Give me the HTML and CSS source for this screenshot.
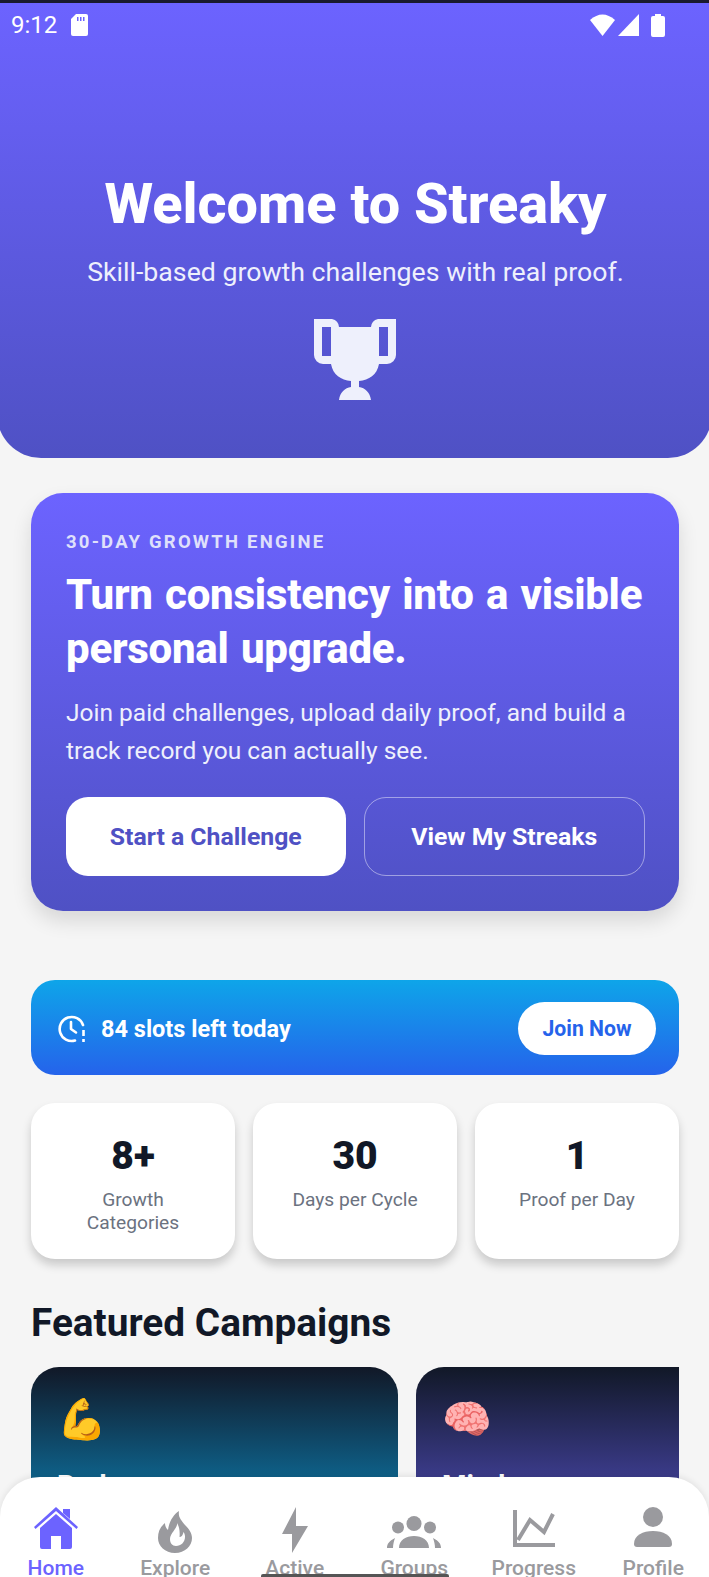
FILE: index.html
```html
<!DOCTYPE html>
<html lang="en">

<head>
    <meta charset="UTF-8">
    <meta name="viewport" content="width=device-width, initial-scale=1.0">
    <title>Streaky</title>
    <link rel="stylesheet" href="styles.css">
</head>

<body>
    <div class="screen">
        <!-- Android status bar -->
        <div class="status-bar">
            <span class="status-time">9:12</span>
            <svg class="sd-icon" width="17" height="22" viewBox="0 0 17 22">
                <path fill="#fff" d="M5 0h10a2 2 0 0 1 2 2v18a2 2 0 0 1-2 2H2a2 2 0 0 1-2-2V5z" />
                <path fill="#6C63FF" d="M6 3h1.500v4H6zM9 3h1.500v4H9zM12 3h1.500v4H12z" />
            </svg>
            <span class="status-right">
                <svg width="25" height="22" viewBox="0 0 25 22">
                    <path fill="#fff" d="M0 6Q12.500-5 25 6L12.500 22z" />
                </svg>
                <svg width="21" height="22" viewBox="0 0 21 22">
                    <path fill="#fff" d="M21 0v22H0z" />
                </svg>
                <svg class="battery" width="14" height="23" viewBox="0 0 14 23">
                    <path fill="#fff" d="M4 0h6v2h2a2 2 0 0 1 2 2v17a2 2 0 0 1-2 2H2a2 2 0 0 1-2-2V4a2 2 0 0 1 2-2h2z" />
                </svg>
            </span>
        </div>

        <header class="hero">
            <h1>Welcome to Streaky</h1>
            <p>Skill-based growth challenges with real proof.</p>
            <svg class="trophy" width="82" height="82" viewBox="0 0 82 82">
                <path fill="#EEF0FC" fill-rule="evenodd" d="M0 1h18a9 9 0 0 1 7 8h32a9 9 0 0 1 7-8h18v36a9 9 0 0 1-9 9H65c-2 11-10 16-20 17v6c6 1 11 5 12 13H25c1-8 6-12 12-13v-6c-10-1-18-6-20-17H9a9 9 0 0 1-9-9zM8 9v29h9V9zM65 9v29h9V9z" />
            </svg>
        </header>

        <main class="content">
            <section class="promo">
                <div class="eyebrow">30-DAY GROWTH ENGINE</div>
                <h2>Turn consistency into a visible personal upgrade.</h2>
                <p>Join paid challenges, upload daily proof, and build a track record you can actually see.</p>
                <div class="promo-buttons">
                    <button class="btn-solid">Start a Challenge</button>
                    <button class="btn-outline">View My Streaks</button>
                </div>
            </section>

            <section class="slots">
                <svg width="28" height="28" viewBox="0 0 28 28" fill="none" stroke="#fff" stroke-width="2.600">
                    <path stroke-linecap="round" d="M25 10A12 12 0 1 0 17 25.500" />
                    <path stroke-linecap="round" stroke-linejoin="round" d="M13 7v7l5 3.500" />
                    <path d="M25.500 15v6M25.500 24v3" />
                </svg>
                <span class="slots-text">84 slots left today</span>
                <button class="btn-join">Join Now</button>
            </section>

            <section class="stats">
                <div class="stat">
                    <div class="stat-num">8+</div>
                    <div class="stat-label">Growth Categories</div>
                </div>
                <div class="stat">
                    <div class="stat-num">30</div>
                    <div class="stat-label">Days per Cycle</div>
                </div>
                <div class="stat">
                    <div class="stat-num">1</div>
                    <div class="stat-label">Proof per Day</div>
                </div>
            </section>

            <h2 class="section-title">Featured Campaigns</h2>
            <section class="campaigns">
                <div class="campaign teal">
                    <div class="emoji">💪</div>
                    <h3>Body</h3>
                </div>
                <div class="campaign indigo">
                    <div class="emoji">🧠</div>
                    <h3>Mind</h3>
                </div>
            </section>
        </main>

        <nav class="tabbar">
            <div class="tab active">
                <svg width="44" height="46" viewBox="0 0 44 46">
                    <path fill="currentColor" d="M29 2h7v10l-7-6zM22 0l22 20-1.500 2L22 4 1.500 22 0 20zM22 7l16 14v19a2 2 0 0 1-2 2H27V29H17v13H8a2 2 0 0 1-2-2V21z" />
                </svg>
                <span>Home</span>
            </div>
            <div class="tab">
                <svg width="34" height="46" viewBox="0 0 34 46">
                    <path fill="currentColor" fill-rule="evenodd" d="M21 4c-1 6 2 9 6 14 4 4 7 8 7 13 0 8-7 15-17 15S0 39 0 31c0-6 2-11 7-15 0 3 1 5 3 7 1-8 5-15 11-19zM19 16c1 5-7 10-7 16 0 4 2 7 6 7 5 0 9-4 9-9 0-2-.5-4-1.500-5-.5 3-2 5-4 5 .5-5 0-10-2.500-14z" />
                </svg>
                <span>Explore</span>
            </div>
            <div class="tab">
                <svg width="26" height="46" viewBox="0 0 26 46">
                    <path fill="currentColor" d="M14 0v19h12L10 46V27H0z" />
                </svg>
                <span>Active</span>
            </div>
            <div class="tab">
                <svg width="54" height="46" viewBox="0 0 54 46">
                    <circle cx="27" cy="16.500" r="7.500" fill="currentColor" />
                    <circle cx="11" cy="20.500" r="6" fill="currentColor" />
                    <circle cx="43" cy="20.500" r="6" fill="currentColor" />
                    <path fill="currentColor" d="M12 41c0-8 7-12 15-12s15 4 15 12H12zM0 41c0-4 2-7 8-10-1 3-2 6-2 10zM54 41c0-4-2-7-8-10 1 3 2 6 2 10z" />
                </svg>
                <span>Groups</span>
            </div>
            <div class="tab">
                <svg width="42" height="46" viewBox="0 0 42 46" fill="none" stroke="currentColor" stroke-width="4">
                    <path d="M2 3v35h40" />
                    <path d="M5 33 17 13l14 12 9-18" />
                </svg>
                <span>Progress</span>
            </div>
            <div class="tab">
                <svg width="38" height="46" viewBox="0 0 38 46">
                    <circle cx="19" cy="10" r="10" fill="currentColor" />
                    <path fill="currentColor" d="M0 37c0-9 9-13 19-13s19 4 19 13a3 3 0 0 1-3 3H3a3 3 0 0 1-3-3z" />
                </svg>
                <span>Profile</span>
            </div>
        </nav>
        <div class="home-bar"></div>
    </div>
</body>

</html>
```

FILE: styles.css
```css
* {
    box-sizing: border-box;
}

body {
    margin: 0;
    font-family: Roboto, "Liberation Sans", sans-serif;
    background-color: #f5f5f5;
}

.screen {
    position: relative;
    width: 709px;
    height: 1577px;
    overflow: hidden;
    background-color: #f5f5f5;
    border-top: 3px solid #1a1a2e;
}

h1,
h2,
h3,
p {
    margin: 0;
}

button {
    font-family: inherit;
    border: none;
    cursor: pointer;
}

.status-bar {
    position: absolute;
    top: 0;
    left: 0;
    right: 0;
    display: flex;
    align-items: center;
    height: 44px;
    padding: 0 44px 0 11px;
    color: white;
    z-index: 2;
}

.status-time {
    font-size: 24px;
}

.sd-icon {
    margin-left: 14px;
}

.status-right {
    display: flex;
    align-items: center;
    gap: 3px;
    margin-left: auto;
}

.battery {
    margin-left: 9px;
}

.hero {
    height: 455px;
    margin: 0 -3px;
    padding-top: 169px;
    text-align: center;
    color: white;
    background: linear-gradient(180deg, #6c63ff, #4f51c4);
    border-radius: 0 0 44px 44px;
}

.hero h1 {
    padding-left: 2px;
    font-size: 55.800px;
    line-height: 64px;
    font-weight: 800;
}

.hero p {
    margin-top: 19px;
    padding-left: 2px;
    font-size: 26.700px;
    line-height: 34px;
    color: #eef0fc;
}

.trophy {
    display: block;
    margin: 29px auto 0;
}

.content {
    padding: 35px 30px 0 31px;
}

.promo {
    height: 418px;
    padding: 36px 34px 36px 35px;
    color: white;
    background: linear-gradient(180deg, #6c63ff, #4f51c4);
    border-radius: 32px;
    box-shadow: 0 10px 20px rgba(0, 0, 0, 0.12);
}

.eyebrow {
    font-size: 18.500px;
    line-height: 26px;
    font-weight: 700;
    letter-spacing: 2.2px;
    color: #dfe0fb;
}

.promo h2 {
    margin-top: 13px;
    font-size: 42px;
    line-height: 54px;
    font-weight: 800;
    letter-spacing: -0.26px;
    word-spacing: 2.2px;
}

.promo p {
    margin-top: 18px;
    font-size: 24.500px;
    line-height: 38px;
    color: #eef0fc;
}

.promo-buttons {
    display: flex;
    gap: 18px;
    margin-top: 27px;
}

.promo-buttons button {
    flex: 1;
    height: 79px;
    font-size: 24.800px;
    font-weight: 700;
    border-radius: 22px;
}

.btn-solid {
    color: #4f51c4;
    background-color: white;
}

.btn-outline {
    color: white;
    background: transparent;
    border: 1px solid rgba(255, 255, 255, 0.45);
}

.slots {
    display: flex;
    align-items: center;
    height: 95px;
    margin-top: 69px;
    padding: 2px 23px 0 27px;
    color: white;
    background: linear-gradient(180deg, #0ea5e9, #2563eb);
    border-radius: 24px;
}

.slots-text {
    margin-left: 15px;
    font-size: 23.500px;
    font-weight: 700;
}

.btn-join {
    width: 138px;
    height: 53px;
    margin-left: auto;
    font-size: 21.200px;
    font-weight: 700;
    color: #2563eb;
    background-color: white;
    border-radius: 27px;
}

.stats {
    display: flex;
    gap: 18px;
    margin-top: 28px;
}

.stat {
    flex: 1;
    height: 156px;
    padding: 28px 24px 0;
    text-align: center;
    background-color: white;
    border-radius: 24px;
    box-shadow: 0 6px 10px rgba(0, 0, 0, 0.18);
}

.stat-num {
    font-size: 39px;
    line-height: 50px;
    font-weight: 900;
    color: #111827;
}

.stat-label {
    margin-top: 7px;
    font-size: 19.200px;
    line-height: 23px;
    color: #6b7280;
}

.section-title {
    margin-top: 41px;
    font-size: 38.800px;
    line-height: 46px;
    font-weight: 700;
    color: #111827;
}

.campaigns {
    display: flex;
    gap: 18px;
    margin-top: 21px;
    overflow: hidden;
}

.campaign {
    flex: none;
    width: 367px;
    height: 240px;
    padding: 23px 26px;
    color: white;
    border-radius: 28px;
}

.teal {
    background: linear-gradient(180deg, #111827, #0e6088 110px);
}

.indigo {
    background: linear-gradient(180deg, #111827, #3b3b8a 110px);
}

.emoji {
    font-size: 40px;
    line-height: 60px;
    font-family: "Noto Color Emoji", sans-serif;
}

.campaign h3 {
    margin-top: 19px;
    font-size: 28px;
    font-weight: 700;
}

.tabbar {
    position: absolute;
    left: 0;
    right: 0;
    bottom: -3px;
    display: flex;
    justify-content: center;
    height: 103px;
    background-color: white;
    border-radius: 40px 40px 0 0;
    box-shadow: 0 -2px 6px rgba(0, 0, 0, 0.08);
}

.tab {
    display: flex;
    flex: 0 0 119.500px;
    flex-direction: column;
    align-items: center;
    gap: 3px;
    padding-top: 30px;
    font-size: 21px;
    line-height: 24px;
    font-weight: 500;
    color: #9a9a9e;
}

.tab.active {
    color: #6c63ff;
}

.home-bar {
    position: absolute;
    left: 261px;
    bottom: 0;
    width: 188px;
    height: 3px;
    background-color: #555;
    border-radius: 2px 2px 0 0;
}
```
